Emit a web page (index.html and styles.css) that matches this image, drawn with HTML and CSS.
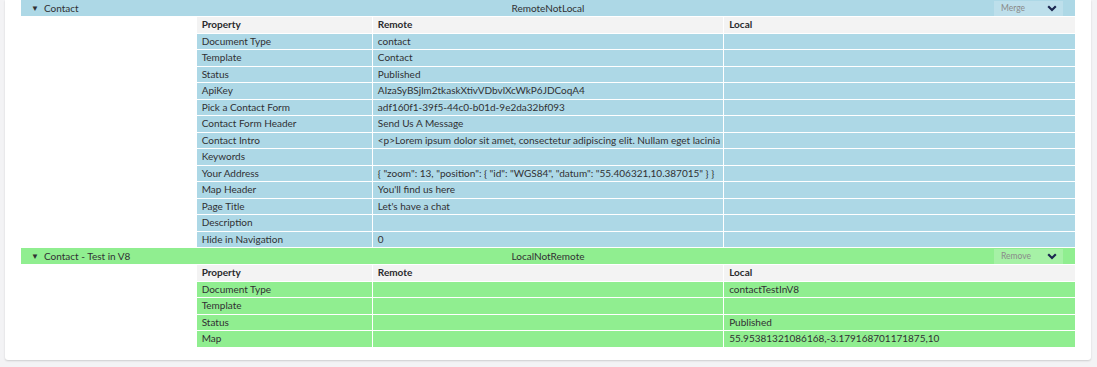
FILE: index.html
```html
<!DOCTYPE html>
<html>
<head>
<meta charset="utf-8">
<link rel="stylesheet" href="styles.css">
</head>
<body>
<div class="card">
  <section class="group remote">
    <div class="group-head">
      <div class="title"><span class="tri">▼</span>Contact</div>
      <div class="state">RemoteNotLocal</div>
      <div class="action">
        <div class="select"><span>Merge</span><svg class="chev" viewBox="0 0 10 7" width="10" height="7"><path d="M1.2 1.3 L5 5 L8.8 1.3" fill="none" stroke="#1b264f" stroke-width="2.2"/></svg></div>
      </div>
    </div>
    <table class="props">
      <colgroup><col class="c1"><col class="c2"><col class="c3"></colgroup>
      <thead><tr><th>Property</th><th>Remote</th><th>Local</th></tr></thead>
      <tbody>
        <tr><td>Document Type</td><td>contact</td><td></td></tr>
        <tr><td>Template</td><td>Contact</td><td></td></tr>
        <tr><td>Status</td><td>Published</td><td></td></tr>
        <tr><td>ApiKey</td><td>AIzaSyBSjlm2tkaskXtivVDbvlXcWkP6JDCoqA4</td><td></td></tr>
        <tr><td>Pick a Contact Form</td><td>adf160f1-39f5-44c0-b01d-9e2da32bf093</td><td></td></tr>
        <tr><td>Contact Form Header</td><td>Send Us A Message</td><td></td></tr>
        <tr><td>Contact Intro</td><td>&lt;p&gt;Lorem ipsum dolor sit amet, consectetur adipiscing elit. Nullam eget lacinia nisl. Vivamus in tortor</td><td></td></tr>
        <tr><td>Keywords</td><td></td><td></td></tr>
        <tr><td>Your Address</td><td>{ "zoom": 13, "position": { "id": "WGS84", "datum": "55.406321,10.387015" } }</td><td></td></tr>
        <tr><td>Map Header</td><td>You'll find us here</td><td></td></tr>
        <tr><td>Page Title</td><td>Let's have a chat</td><td></td></tr>
        <tr><td>Description</td><td></td><td></td></tr>
        <tr><td>Hide in Navigation</td><td>0</td><td></td></tr>
      </tbody>
    </table>
  </section>
  <section class="group local">
    <div class="group-head">
      <div class="title"><span class="tri">▼</span>Contact - Test in V8</div>
      <div class="state">LocalNotRemote</div>
      <div class="action">
        <div class="select"><span>Remove</span><svg class="chev" viewBox="0 0 10 7" width="10" height="7"><path d="M1.2 1.3 L5 5 L8.8 1.3" fill="none" stroke="#1b264f" stroke-width="2.2"/></svg></div>
      </div>
    </div>
    <table class="props">
      <colgroup><col class="c1"><col class="c2"><col class="c3"></colgroup>
      <thead><tr><th>Property</th><th>Remote</th><th>Local</th></tr></thead>
      <tbody>
        <tr><td>Document Type</td><td></td><td>contactTestInV8</td></tr>
        <tr><td>Template</td><td></td><td></td></tr>
        <tr><td>Status</td><td></td><td>Published</td></tr>
        <tr><td>Map</td><td></td><td>55.95381321086168,-3.179168701171875,10</td></tr>
      </tbody>
    </table>
  </section>
</div>
</body>
</html>
```

FILE: styles.css
```css
html, body {
  margin: 0;
  padding: 0;
  background: #f3f3f5;
}
body {
  padding: 0 6px 6px 5px;
  font-family: Lato, "Open Sans", sans-serif;
  font-size: 10px;
  color: #303033;
}
.card {
  background: #fff;
  border-radius: 0 0 3px 3px;
  box-shadow: 0 1px 2px rgba(0, 0, 0, 0.16);
  padding: 0 16px 13px 16px;
}
.group-head {
  display: grid;
  grid-template-columns: 1fr auto 1fr;
  align-items: center;
  height: 16px;
  line-height: 16px;
}
.remote .group-head { background: #add8e6; }
.local .group-head { background: #90ee90; margin-top: 1px; }
.title {
  padding-left: 10px;
  color: #303033;
}
.tri {
  font-size: 8px;
  display: inline-block;
  width: 13px;
  vertical-align: 1px;
}
.state {
  text-align: center;
}
.action {
  display: flex;
  justify-content: flex-end;
  padding-right: 12px;
}
.select {
  width: 69px;
  height: 15px;
  box-sizing: border-box;
  display: flex;
  align-items: center;
  justify-content: space-between;
  padding: 0 6px 0 7px;
  font-size: 8.5px;
  color: #8a8a8a;
  background: rgba(255, 255, 255, 0.2);
}
.chev { display: block; }
.props {
  margin-left: calc(100% / 6);
  width: calc(100% * 5 / 6);
  border-collapse: collapse;
  table-layout: fixed;
}
.c1 { width: 20%; }
.c2 { width: 40%; }
.c3 { width: 40%; }
.props th, .props td {
  border: 1px solid #fff;
  border-bottom: 0;
  padding: 0 5px;
  height: 15.5px;
  line-height: 15.5px;
  text-align: left;
  white-space: nowrap;
  overflow: hidden;
  font-weight: normal;
}
.props tr > :first-child { border-left: 0; }
.props tr > :last-child { border-right: 0; }
.props th {
  background: #f3f3f3;
  font-weight: 700;
  color: #2a2a2d;
}
.remote .props td { background: #add8e6; }
.local .props td { background: #90ee90; }
```
